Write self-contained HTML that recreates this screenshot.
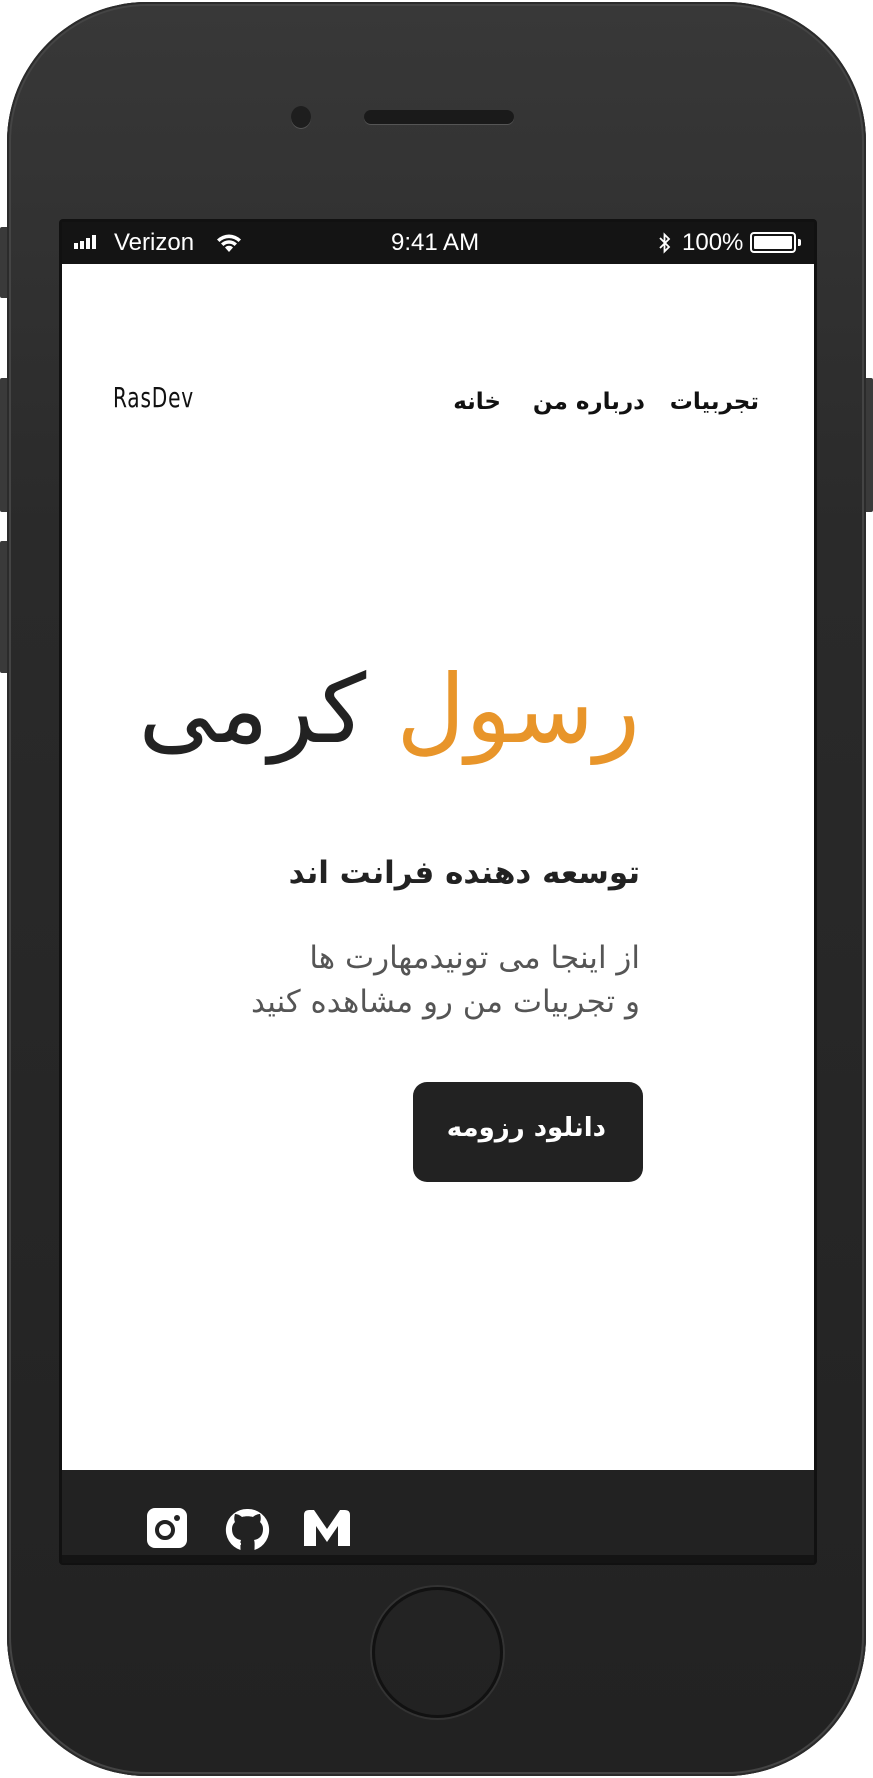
<!DOCTYPE html>
<html><head><meta charset="utf-8"><style>
*{margin:0;padding:0;box-sizing:border-box}
html,body{width:873px;height:1778px;background:#fff;overflow:hidden;position:relative;font-family:"Liberation Sans","DejaVu Sans",sans-serif}
.phone{position:absolute;left:7px;top:2px;width:859px;height:1774px;border-radius:140px;background:linear-gradient(#383838,#2a2a2a 30%,#222 100%);box-shadow:inset 0 0 0 2px #2b2b2b,inset 0 0 0 4px #444}
.btn{position:absolute;background:#3a3a3a;border-radius:2px}
.cam{position:absolute;left:291px;top:106px;width:20px;height:22px;border-radius:50%;background:#1e1e1e;box-shadow:0 1px 0 #555}
.spk{position:absolute;left:364px;top:110px;width:150px;height:14px;border-radius:7px;background:#1a1a1a;box-shadow:0 1px 0 #555}
.screen{position:absolute;left:59px;top:219px;width:758px;height:1346px;background:#111;border-radius:4px}
.status{position:absolute;left:62px;top:222px;width:752px;height:42px;background:#141414;color:#fff;font-size:24px}
.content{position:absolute;left:62px;top:264px;width:752px;height:1206px;background:#fff}
.footer{position:absolute;left:62px;top:1470px;width:752px;height:85px;background:#222}
.rtl{direction:rtl;position:absolute;font-family:"DejaVu Sans",sans-serif;white-space:nowrap}
.home{position:absolute;left:372px;top:1587px;width:131px;height:131px;border-radius:50%;border:3px solid #111;box-shadow:0 0 0 2px #333}
</style></head><body>
<div class="btn" style="left:0;top:227px;width:9px;height:71px"></div>
<div class="btn" style="left:0;top:378px;width:9px;height:134px"></div>
<div class="btn" style="left:0;top:541px;width:9px;height:132px"></div>
<div class="btn" style="left:864px;top:378px;width:9px;height:134px"></div>
<div class="phone"></div>
<div class="cam"></div><div class="spk"></div>
<div class="screen"></div>
<div class="status">
  <div style="position:absolute;left:12px;top:13px;display:flex;align-items:flex-end;gap:2px;height:14px">
    <div style="width:4px;height:6px;background:#fff"></div><div style="width:4px;height:8px;background:#fff"></div><div style="width:4px;height:11px;background:#fff"></div><div style="width:4px;height:14px;background:#fff"></div>
  </div>
  <div style="position:absolute;left:52px;top:7px">Verizon</div>
  <svg style="position:absolute;left:154px;top:11px" width="26" height="20" viewBox="0 0 26 20"><path d="M1 6.5A17 17 0 0 1 25 6.5L22.5 9A13.5 13.5 0 0 0 3.5 9Z M5 10.5A11.5 11.5 0 0 1 21 10.5L18.5 13A8 8 0 0 0 7.5 13Z M9 14.5A5.5 5.5 0 0 1 17 14.5L13 19Z" fill="#fff"/></svg>
  <div style="position:absolute;left:329px;top:7px">9:41 AM</div>
  <svg style="position:absolute;left:596px;top:10px" width="14" height="22" viewBox="0 0 14 22"><path d="M2 6L11 15L6.5 19.5V2.5L11 7L2 16" fill="none" stroke="#fff" stroke-width="1.8"/></svg>
  <div style="position:absolute;left:620px;top:7px">100%</div>
  <div style="position:absolute;left:688px;top:10px;width:46px;height:21px;border:2px solid #fff;border-radius:4px;padding:2px"><div style="background:#fff;width:100%;height:100%;border-radius:1px"></div></div>
  <div style="position:absolute;left:736px;top:17px;width:3px;height:7px;background:#fff;border-radius:0 2px 2px 0"></div>
</div>
<div class="content"></div>
<div style="position:absolute;left:113px;top:381px;font-family:'DejaVu Sans Condensed','Liberation Sans Narrow',sans-serif;font-size:28px;transform:scaleX(.8);transform-origin:left;color:#111;font-weight:300;letter-spacing:1px">RasDev</div>
<div class="rtl" style="right:114px;top:389px;font-size:23px;color:#111;font-weight:bold">تجربیات</div>
<div class="rtl" style="right:228px;top:389px;font-size:23px;color:#111;font-weight:bold">درباره من</div>
<div class="rtl" style="right:372px;top:389px;font-size:23px;color:#111;font-weight:bold">خانه</div>
<div class="rtl" style="right:233px;top:655px;font-size:95px;color:#222"><span style="color:#e8952a">رسول</span> کرمی</div>
<div class="rtl" style="right:233px;top:855px;font-size:31px;color:#222;font-weight:bold">توسعه دهنده فرانت اند</div>
<div class="rtl" style="right:233px;top:936px;font-size:31px;color:#555;line-height:44px">از اینجا می تونیدمهارت ها<br>و تجربیات من رو مشاهده کنید</div>
<div style="position:absolute;left:413px;top:1082px;width:230px;height:100px;background:#222;border-radius:14px"></div>
<div class="rtl" style="right:267px;top:1113px;font-size:26px;color:#fff;font-weight:bold">دانلود رزومه</div>
<div class="footer"></div>
<svg style="position:absolute;left:147px;top:1508px" width="40" height="40" viewBox="0 0 40 40"><rect width="40" height="40" rx="8" fill="#fff"/><circle cx="18" cy="22" r="8" fill="none" stroke="#222" stroke-width="4"/><circle cx="30" cy="10" r="3" fill="#222"/></svg>
<svg style="position:absolute;left:225px;top:1508px" width="45" height="44" viewBox="0 0 45 44"><path d="M22.5 1A21 21 0 0 0 15.5 42C15.5 38 15 34 16 32C10 31 7 27 7 21C7 18 8 16 10 14C9 12 9 9 10 6C13 6 16 8 17 9C20 8 25 8 28 9C29 8 32 6 35 6C36 9 36 12 35 14C37 16 38 18 38 21C38 27 35 31 29 32C30 34 29.5 38 29.5 42A21 21 0 0 0 22.5 1Z" fill="#fff"/><path d="M16 36C12 36 10 33 8 31" stroke="#fff" stroke-width="2" fill="none"/></svg>
<svg style="position:absolute;left:302px;top:1509px" width="50" height="38" viewBox="0 0 50 38"><path d="M2 6Q2 1 7 1H12L25 20L38 1H43Q48 1 48 6V37H36V17L25 33L14 17V37H2Z" fill="#fff"/></svg>
<div style="position:absolute;left:62px;top:1555px;width:752px;height:8px;background:#141414"></div>
<div class="home"></div>
</body></html>
